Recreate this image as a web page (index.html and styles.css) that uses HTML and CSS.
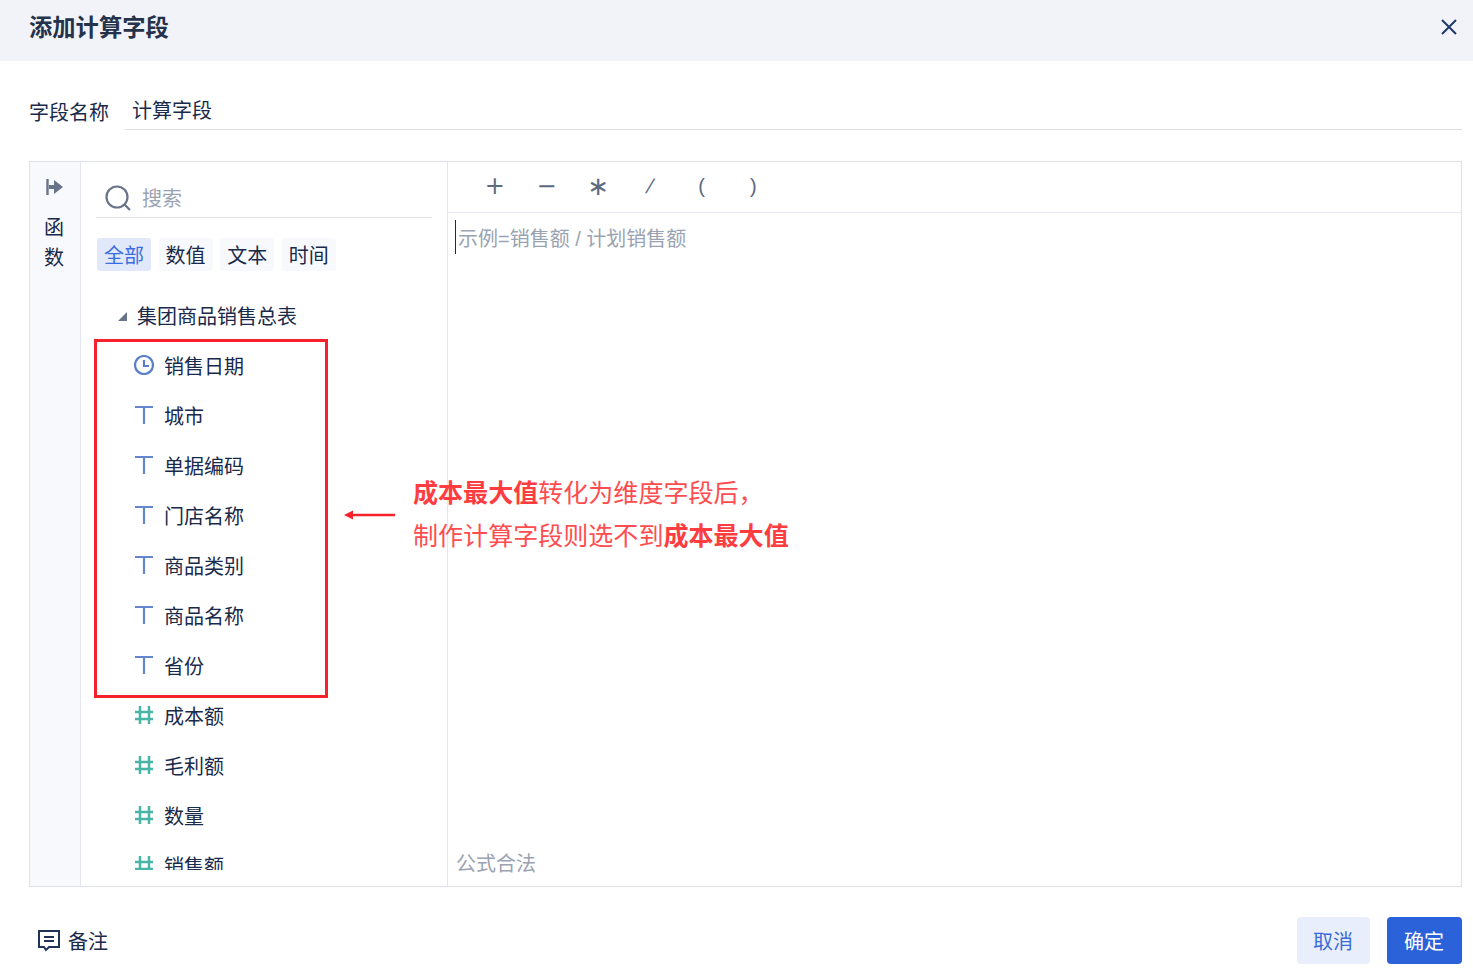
FILE: index.html
```html
<!DOCTYPE html>
<html lang="zh-CN">
<head>
<meta charset="utf-8">
<title>添加计算字段</title>
<link rel="stylesheet" href="styles.css">
</head>
<body>
<div class="dialog">
  <header class="head">
    <h1 class="title">添加计算字段</h1>
    <svg class="close" width="18" height="18" viewBox="0 0 18 18"><path d="M2 2l14 14M16 2L2 16" stroke="#1f3a68" stroke-width="2" fill="none"/></svg>
  </header>
  <div class="name-row">
    <span class="name-label">字段名称</span>
    <div class="name-input">计算字段</div>
  </div>
  <section class="panel">
    <aside class="rail">
      <svg class="rail-icon" width="18" height="16" viewBox="0 0 18 16"><path d="M2.500 0v16" stroke="#68748a" stroke-width="2.400"/><path d="M4 6h5V1l9 7-9 7v-5H4z" fill="#68748a"/></svg>
      <div class="rail-text">函<br>数</div>
    </aside>
    <div class="fields">
      <div class="search">
        <svg width="26" height="26" viewBox="0 0 26 26"><circle cx="12" cy="12" r="10.500" fill="none" stroke="#68748a" stroke-width="2.200"/><path d="M19 19l6 6" stroke="#68748a" stroke-width="2.200"/></svg>
        <span class="search-text">搜索</span>
      </div>
      <div class="tabs">
        <span class="tab tab-on">全部</span>
        <span class="tab">数值</span>
        <span class="tab">文本</span>
        <span class="tab">时间</span>
      </div>
      <div class="tree">
        <div class="root"><span class="caret"></span>集团商品销售总表</div>
        <div class="item">
          <svg class="ico" width="20" height="20" viewBox="0 0 20 20"><circle cx="10" cy="10" r="9" fill="none" stroke="#5b7fc7" stroke-width="2.200"/><path d="M10 5v6h5" fill="none" stroke="#5b7fc7" stroke-width="2.200"/></svg>销售日期</div>
        <div class="item"><svg class="ico" width="20" height="20" viewBox="0 0 20 20"><path d="M1 2h18M10 2v17" fill="none" stroke="#6486cc" stroke-width="2.200"/></svg>城市</div>
        <div class="item"><svg class="ico" width="20" height="20" viewBox="0 0 20 20"><path d="M1 2h18M10 2v17" fill="none" stroke="#6486cc" stroke-width="2.200"/></svg>单据编码</div>
        <div class="item"><svg class="ico" width="20" height="20" viewBox="0 0 20 20"><path d="M1 2h18M10 2v17" fill="none" stroke="#6486cc" stroke-width="2.200"/></svg>门店名称</div>
        <div class="item"><svg class="ico" width="20" height="20" viewBox="0 0 20 20"><path d="M1 2h18M10 2v17" fill="none" stroke="#6486cc" stroke-width="2.200"/></svg>商品类别</div>
        <div class="item"><svg class="ico" width="20" height="20" viewBox="0 0 20 20"><path d="M1 2h18M10 2v17" fill="none" stroke="#6486cc" stroke-width="2.200"/></svg>商品名称</div>
        <div class="item"><svg class="ico" width="20" height="20" viewBox="0 0 20 20"><path d="M1 2h18M10 2v17" fill="none" stroke="#6486cc" stroke-width="2.200"/></svg>省份</div>
        <div class="item"><svg class="ico" width="20" height="20" viewBox="0 0 20 20"><path d="M1 7h18M1 14h18M6 1v18M15 1v18" fill="none" stroke="#49b5a6" stroke-width="2.500"/></svg>成本额</div>
        <div class="item"><svg class="ico" width="20" height="20" viewBox="0 0 20 20"><path d="M1 7h18M1 14h18M6 1v18M15 1v18" fill="none" stroke="#49b5a6" stroke-width="2.500"/></svg>毛利额</div>
        <div class="item"><svg class="ico" width="20" height="20" viewBox="0 0 20 20"><path d="M1 7h18M1 14h18M6 1v18M15 1v18" fill="none" stroke="#49b5a6" stroke-width="2.500"/></svg>数量</div>
        <div class="item"><svg class="ico" width="20" height="20" viewBox="0 0 20 20"><path d="M1 7h18M1 14h18M6 1v18M15 1v18" fill="none" stroke="#49b5a6" stroke-width="2.500"/></svg>销售额</div>
      </div>
    </div>
    <div class="editor">
      <div class="ops">
        <span class="op op-wide">+</span><span class="op op-wide">−</span><span class="op op-star">∗</span><span class="op op-slash">/</span><span class="op">(</span><span class="op">)</span>
      </div>
      <div class="code">
        <span class="cursor"></span><span class="placeholder">示例=销售额 / 计划销售额</span>
      </div>
      <div class="status">公式合法</div>
    </div>
    <div class="mark-box"></div>
    <svg class="mark-arrow" width="52" height="10" viewBox="0 0 52 10"><path d="M51 5H6" stroke="#f5222d" stroke-width="2.400"/><path d="M0 5l9-4.500v9z" fill="#f5222d"/></svg>
    <div class="note"><b>成本最大值</b>转化为维度字段后，<br>制作计算字段则选不到<b>成本最大值</b></div>
  </section>
  <footer class="foot">
    <div class="remark">
      <svg width="22" height="22" viewBox="0 0 22 22"><path d="M1 1h20v16H11l-3 3-2-3H1z" fill="none" stroke="#1f3359" stroke-width="2"/><path d="M6 7h10M6 11h10" stroke="#1f3359" stroke-width="2"/></svg>
      <span>备注</span>
    </div>
    <div class="actions">
      <span class="btn btn-cancel">取消</span>
      <span class="btn btn-ok">确定</span>
    </div>
  </footer>
</div>
</body>
</html>
```
FILE: styles.css
```css
* { box-sizing: border-box; }
html, body { margin: 0; padding: 0; }
body {
  width: 1473px;
  height: 975px;
  overflow: hidden;
  background: #fff;
  color: #1a2a4a;
  font-family: "Liberation Sans", "Noto Sans CJK SC", sans-serif;
  font-size: 20px;
}
.dialog { display: flex; flex-direction: column; height: 975px; }
.head {
  height: 61px;
  background: #f1f3f8;
  display: flex;
  align-items: center;
  justify-content: space-between;
  padding: 0 15px 0 29px;
}
.title { margin: 0 0 6px; font-size: 23.3px; font-weight: 700; color: #25324b; line-height: 32px; }
.close { margin-bottom: 7px; }
.name-row {
  height: 69px;
  margin: 0 11px 0 29px;
  display: flex;
  align-items: flex-start;
  padding-top: 35px;
}
.name-label { width: 96px; line-height: 34px; }
.name-input {
  flex: 1;
  height: 35px;
  line-height: 32px;
  padding-left: 7px;
  border-bottom: 1px solid #dcdfe4;
  margin-top: -1px;
  color: #1a2a4a;
}
.panel {
  position: relative;
  margin: 31px 11px 0 29px;
  height: 726px;
  border: 1px solid #dfe2ea;
  display: flex;
}
.rail {
  width: 51px;
  flex: none;
  background: #f8f9fd;
  border-right: 1px solid #e3e6f0;
  display: flex;
  flex-direction: column;
  align-items: center;
  padding: 17px 2px 0 0;
}
.rail-icon { display: block; }
.rail-text { margin-top: 18px; line-height: 30px; text-align: center; }
.fields {
  width: 366px;
  flex: none;
  padding: 16px 15px 0 15px;
  display: flex;
  flex-direction: column;
  height: 708px;
}
.search {
  height: 40px;
  flex: none;
  border-bottom: 1px solid #dfe2e8;
  display: flex;
  align-items: center;
  padding-left: 9px;
  gap: 11px;
}
.search-text { color: #9aa3b2; }
.tabs { display: flex; gap: 7.600px; margin-top: 20px; padding-left: 1px; flex: none; }
.tab {
  height: 33px;
  line-height: 36px;
  padding: 0 7px;
  background: #f8f9fd;
  border-radius: 3px;
}
.tab-on { background: #e0e8fa; color: #3a6ee0; }
.tree { margin-top: 20px; flex: 1; overflow: hidden; }
.root {
  height: 49px;
  line-height: 52px;
  padding-left: 41px;
  position: relative;
}
.caret {
  position: absolute;
  left: 22px;
  top: 21px;
  width: 0;
  height: 0;
  border-style: solid;
  border-width: 0 0 9px 9px;
  border-color: transparent transparent #68748a transparent;
}
.item {
  height: 50px;
  display: flex;
  align-items: center;
  padding-left: 38px;
}
.ico { margin-right: 10px; flex: none; }
.editor {
  flex: 1;
  border-left: 1px solid #e3e6f0;
  display: flex;
  flex-direction: column;
}
.ops {
  height: 51px;
  flex: none;
  border-bottom: 1px solid #e6e9f2;
  display: flex;
  padding-left: 21px;
}
.op {
  width: 51.700px;
  text-align: center;
  line-height: 48px;
  font-size: 20px;
  color: #5d6a80;
}
.op-wide { font-family: "DejaVu Sans", sans-serif; font-size: 24px; }
.op-star { font-family: "DejaVu Sans", sans-serif; font-size: 26px; font-weight: 400; }
.op-slash { transform: skewX(-18deg); }
.code {
  flex: 1;
  display: flex;
  align-items: flex-start;
  padding: 7px 0 0 7px;
}
.cursor { width: 1px; height: 34px; background: #1a2a4a; flex: none; }
.placeholder { color: #9aa3b2; line-height: 38px; margin-left: 2px; }
.status { flex: none; height: 30px; padding-left: 8px; color: #9aa3b2; line-height: 34px; margin-bottom: 9px; }
.mark-box {
  position: absolute;
  left: 64px;
  top: 177px;
  width: 234px;
  height: 359px;
  border: 3px solid #f5222d;
}
.mark-arrow { position: absolute; left: 314px; top: 348px; }
.note {
  position: absolute;
  left: 383px;
  top: 310px;
  font-size: 25.050px;
  line-height: 43px;
  color: #ff4d4f;
  white-space: nowrap;
}
.note b { font-weight: 700; color: #ff3d40; }
.foot {
  flex: 1;
  display: flex;
  align-items: flex-start;
  justify-content: space-between;
  padding: 30px 11px 0 38px;
}
.remark { display: flex; align-items: center; gap: 8px; height: 47px; }
.remark svg { display: block; }
.actions { display: flex; gap: 17px; }
.btn {
  height: 47px;
  width: 73px;
  line-height: 50px;
  padding-right: 1px;
  text-align: center;
  border-radius: 4px;
}
.btn-cancel { background: #e8eefb; color: #3a6bd6; }
.btn-ok { background: #2b62d9; color: #fff; width: 75px; }
```
